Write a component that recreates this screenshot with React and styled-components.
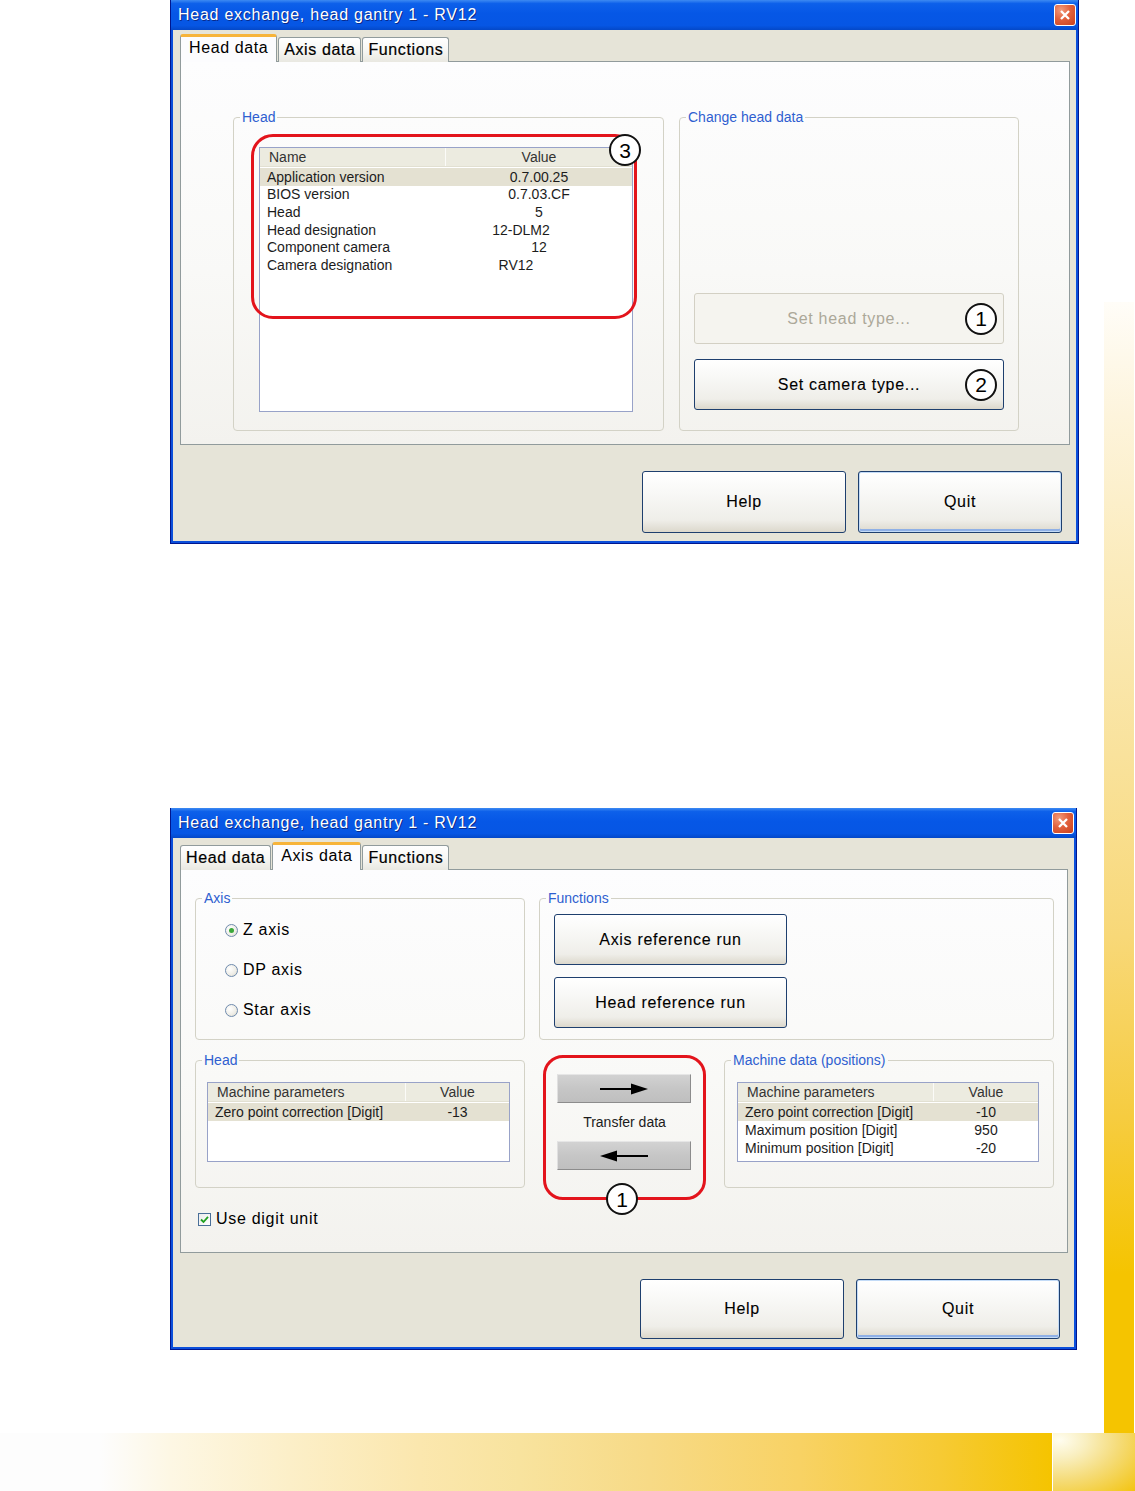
import React from 'react';
import styled, { createGlobalStyle, css } from 'styled-components';

const FONT = '"Liberation Sans", Arial, sans-serif';

const GlobalStyle = createGlobalStyle`
  html, body { margin: 0; padding: 0; background: #ffffff; }
  body { font-family: ${FONT}; }
  * { box-sizing: border-box; }
`;

const headRows = [
  { name: 'Application version', value: '0.7.00.25', selected: true },
  { name: 'BIOS version', value: '0.7.03.CF' },
  { name: 'Head', value: '5' },
  { name: 'Head designation', value: '12-DLM2', shift: -18 },
  { name: 'Component camera', value: '12' },
  { name: 'Camera designation', value: 'RV12', shift: -23 },
];

const axisHeadRows = [
  { name: 'Zero point correction [Digit]', value: '-13', selected: true },
];

const machineRows = [
  { name: 'Zero point correction [Digit]', value: '-10', selected: true },
  { name: 'Maximum position [Digit]', value: '950' },
  { name: 'Minimum position [Digit]', value: '-20' },
];

const tabs = ['Head data', 'Axis data', 'Functions'];

export default function App() {
  return (
    <>
      <GlobalStyle />
      <Page>
        <Main>
          <Dialog width={909} top={0} btnH={62} activeTab="Head data">
            <HeadDataLayout>
              <Group>
                <Legend>Head</Legend>
                <GroupBody $h={305} $pad="22px 0 0 25px">
                  <DataList rows={headRows} width={374} height={265} col={186} rowH={17.6} first="Name" />
                  <Callout>
                    <CalloutMarker>3</CalloutMarker>
                  </Callout>
                </GroupBody>
              </Group>
              <Group>
                <Legend>Change head data</Legend>
                <ButtonStack>
                  <XpButton $w={310} $h={51} disabled>
                    Set head type...
                    <ButtonMarker>1</ButtonMarker>
                  </XpButton>
                  <XpButton $w={310} $h={51}>
                    Set camera type...
                    <ButtonMarker>2</ButtonMarker>
                  </XpButton>
                </ButtonStack>
              </Group>
            </HeadDataLayout>
          </Dialog>

          <Dialog width={907} top={264} btnH={60} activeTab="Axis data">
            <AxisLayout>
              <TopRow>
                <Group>
                  <Legend>Axis</Legend>
                  <GroupBody $h={133} $pad="4px 0 0 29px">
                    {['Z axis', 'DP axis', 'Star axis'].map((label, i) => (
                      <RadioRow key={label}>
                        <RadioDot $checked={i === 0} />
                        {label}
                      </RadioRow>
                    ))}
                  </GroupBody>
                </Group>
                <Group>
                  <Legend>Functions</Legend>
                  <FunctionStack>
                    <XpButton $w={233} $h={51}>Axis reference run</XpButton>
                    <XpButton $w={233} $h={51}>Head reference run</XpButton>
                  </FunctionStack>
                </Group>
              </TopRow>

              <MidRow>
                <Group $w={330}>
                  <Legend>Head</Legend>
                  <GroupBody $h={119} $pad="14px 0 0 11px">
                    <DataList rows={axisHeadRows} width={303} height={80} col={198} rowH={18} first="Machine parameters" />
                  </GroupBody>
                </Group>

                <TransferBox>
                  <ArrowButton aria-label="Transfer to machine">
                    <Arrow dir="right" />
                  </ArrowButton>
                  <TransferLabel>Transfer data</TransferLabel>
                  <ArrowButton aria-label="Transfer to head">
                    <Arrow dir="left" />
                  </ArrowButton>
                  <TransferMarker>1</TransferMarker>
                </TransferBox>

                <Group $w={330}>
                  <Legend>Machine data (positions)</Legend>
                  <GroupBody $h={119} $pad="14px 0 0 12px">
                    <DataList rows={machineRows} width={302} height={80} col={196} rowH={18} first="Machine parameters" />
                  </GroupBody>
                </Group>
              </MidRow>

              <CheckRow>
                <CheckBox>
                  <svg width="9" height="9" viewBox="0 0 9 9">
                    <path d="M1 4.5 L3.5 7 L8 1.8" fill="none" stroke="#21a121" strokeWidth="1.8" />
                  </svg>
                </CheckBox>
                Use digit unit
              </CheckRow>
            </AxisLayout>
          </Dialog>
        </Main>

        <SideStrip>
          <SideBar />
        </SideStrip>

        <BottomBand>
          <Band />
          <Corner />
        </BottomBand>
      </Page>
    </>
  );
}

function Dialog({ width, top, btnH, activeTab, children }) {
  return (
    <Frame $w={width} $top={top}>
      <TitleBar>
        <TitleText>Head exchange, head gantry 1 - RV12</TitleText>
        <CloseButton aria-label="Close">
          <svg width="12" height="12" viewBox="0 0 12 12">
            <path d="M2 2 L10 10 M10 2 L2 10" stroke="#fff" strokeWidth="2.3" />
          </svg>
        </CloseButton>
      </TitleBar>
      <Body>
        <TabStrip>
          {tabs.map((t) => (
            <Tab key={t} $active={t === activeTab}>
              {t}
            </Tab>
          ))}
        </TabStrip>
        <Panel>{children}</Panel>
        <Footer>
          <XpButton $w={204} $h={btnH}>Help</XpButton>
          <XpButton $w={204} $h={btnH} $default>
            Quit
          </XpButton>
        </Footer>
      </Body>
    </Frame>
  );
}

function DataList({ rows, width, height, col, rowH, first }) {
  return (
    <List $w={width} $h={height}>
      <ListHeader $col={col}>
        <HeadCell>{first}</HeadCell>
        <HeadCell $center>Value</HeadCell>
      </ListHeader>
      {rows.map((r) => (
        <ListRow key={r.name} $col={col} $h={rowH} $selected={r.selected}>
          <NameCell>{r.name}</NameCell>
          <ValueCell $shift={r.shift}>{r.value}</ValueCell>
        </ListRow>
      ))}
    </List>
  );
}

function Arrow({ dir }) {
  return (
    <svg width="50" height="14" viewBox="0 0 50 14">
      {dir === 'right' ? (
        <>
          <path d="M1 7 H36" stroke="#000" strokeWidth="2" />
          <polygon points="32,1.5 49,7 32,12.5" fill="#000" />
        </>
      ) : (
        <>
          <path d="M14 7 H49" stroke="#000" strokeWidth="2" />
          <polygon points="18,1.5 1,7 18,12.5" fill="#000" />
        </>
      )}
    </svg>
  );
}

/* page */

const Page = styled.div`
  width: 1135px;
  height: 1491px;
  overflow: hidden;
  display: grid;
  grid-template-columns: 1104px 31px;
  grid-template-rows: 1433px 58px;
  background: #fff;
`;

const Main = styled.main`
  display: flex;
  flex-direction: column;
  align-items: flex-start;
  padding-left: 170px;
`;

const SideStrip = styled.div`
  padding-top: 302px;
`;

const SideBar = styled.div`
  width: 30px;
  height: 100%;
  background: linear-gradient(
    180deg,
    #fffdf8 0%,
    #fdf4dc 10%,
    #fbebbb 24%,
    #f9e29c 40%,
    #f8d878 56%,
    #f6cc40 72%,
    #f5c400 86%,
    #f5c400 100%
  );
`;

const BottomBand = styled.div`
  grid-column: 1 / -1;
  display: flex;
  gap: 1px;
`;

const Band = styled.div`
  width: 1052px;
  background: linear-gradient(
    90deg,
    #fdfdfd 0px,
    #fdfdfd 100px,
    #fdf7e4 170px,
    #fcefc8 290px,
    #fbe7ae 420px,
    #f8e39e 520px,
    #f7da86 650px,
    #f8d264 800px,
    #f6ca34 940px,
    #f5c400 1052px
  );
`;

const Corner = styled.div`
  flex: 1;
  background: radial-gradient(
    ellipse at 8% 12%,
    #fffdf0 0%,
    #f9efc0 25%,
    #f5dc7a 55%,
    #f3c410 100%
  );
`;

/* window chrome */

const Frame = styled.section`
  width: ${(p) => p.$w}px;
  margin-top: ${(p) => p.$top}px;
  border: 1px solid #00168e;
  border-top: none;
  background: #0b4fdb;
  font-family: ${FONT};
`;

const TitleBar = styled.header`
  height: 30px;
  display: flex;
  align-items: center;
  justify-content: space-between;
  padding: 0 2px 0 7px;
  background: linear-gradient(
    180deg,
    #3d8af2 0%,
    #0d60ea 12%,
    #0657e6 45%,
    #0656e4 85%,
    #0448c8 100%
  );
`;

const TitleText = styled.span`
  color: #fff;
  font-size: 16px;
  letter-spacing: 0.75px;
  text-shadow: 1px 1px 0 #0a2a8a;
`;

const CloseButton = styled.span`
  width: 22px;
  height: 22px;
  border: 1px solid #fff;
  border-radius: 3px;
  display: flex;
  align-items: center;
  justify-content: center;
  background: radial-gradient(circle at 30% 25%, #f29b7c 0%, #e2613d 45%, #c9401c 100%);
`;

const Body = styled.div`
  margin: 0 2px 2px;
  padding: 4px 6px 8px 7px;
  background: #e6e4d8;
`;

const TabStrip = styled.nav`
  position: relative;
  z-index: 1;
  display: flex;
  align-items: flex-end;
  gap: 1px;
  height: 28px;
  margin-bottom: -1px;
`;

const Tab = styled.div`
  height: 25px;
  padding: 0 5px;
  display: flex;
  align-items: center;
  border: 1px solid #919b9c;
  border-bottom: none;
  border-radius: 3px 3px 0 0;
  background: linear-gradient(180deg, #ffffff 0%, #f7f7f4 50%, #e9e8e1 100%);
  font-size: 16px;
  letter-spacing: 0.6px;
  color: #000;
  -webkit-text-stroke: 0.2px #000;
  white-space: nowrap;

  ${(p) =>
    p.$active &&
    css`
      height: 28px;
      padding: 0 8px 3px;
      border-top: 3px solid #f7b43a;
      background: #fcfcfe;
      -webkit-text-stroke: 0;
    `}
`;

const Panel = styled.div`
  height: 384px;
  border: 1px solid #919b9c;
  background: linear-gradient(180deg, #fdfdfe 0%, #f9f9f7 55%, #f3f2ee 100%);
`;

const Footer = styled.footer`
  display: flex;
  justify-content: flex-end;
  gap: 12px;
  padding: 26px 8px 0 0;
`;

const XpButton = styled.button`
  position: relative;
  width: ${(p) => p.$w}px;
  height: ${(p) => p.$h}px;
  padding: 0;
  border: 1px solid #1e3f6e;
  border-radius: 3px;
  background: linear-gradient(180deg, #ffffff 0%, #f8f8f6 35%, #efeee9 80%, #dcd8cc 100%);
  font-family: ${FONT};
  font-size: 16px;
  letter-spacing: 0.7px;
  color: #000;
  -webkit-text-stroke: 0.1px #000;

  ${(p) =>
    p.$default &&
    css`
      box-shadow: inset 0 0 0 1px #c3dbf7, inset 0 -2px 0 1px #8fb0e6;
    `}

  ${(p) =>
    p.disabled &&
    css`
      border-color: #d3d0c4;
      background: #f5f4ef;
      color: #aca899;
      -webkit-text-stroke: 0;
    `}
`;

/* groups */

const Group = styled.fieldset`
  margin: 0;
  padding: 0;
  min-width: 0;
  ${(p) => p.$w && `width: ${p.$w}px;`}
  border: 1px solid #d3d2c6;
  border-radius: 4px;
`;

const Legend = styled.legend`
  margin-left: 6px;
  padding: 0 2px;
  font-size: 14px;
  line-height: 16px;
  color: #2f5fd0;
`;

const GroupBody = styled.div`
  position: relative;
  height: ${(p) => p.$h}px;
  padding: ${(p) => p.$pad};
`;

const HeadDataLayout = styled.div`
  display: grid;
  grid-template-columns: 431px 340px;
  gap: 15px;
  padding: 47px 0 0 52px;
`;

const ButtonStack = styled.div`
  height: 305px;
  display: flex;
  flex-direction: column;
  justify-content: flex-end;
  gap: 15px;
  padding: 0 14px 20px;
`;

/* list views */

const List = styled.div`
  width: ${(p) => p.$w}px;
  height: ${(p) => p.$h}px;
  border: 1px solid #98a2c8;
  background: #fff;
  font-size: 14px;
  color: #1c1c1c;
  overflow: hidden;
`;

const ListHeader = styled.div`
  display: grid;
  grid-template-columns: ${(p) => p.$col}px 1fr;
  height: 19px;
  margin-bottom: 1px;
  background: #ecebe0;
  border-bottom: 1px solid #e2e0d2;
`;

const HeadCell = styled.div`
  display: flex;
  align-items: center;
  justify-content: ${(p) => (p.$center ? 'center' : 'flex-start')};
  padding-left: ${(p) => (p.$center ? 0 : 9)}px;
  color: #333;
  &:first-child {
    border-right: 1px solid #fbfbf8;
  }
`;

const ListRow = styled.div`
  display: grid;
  grid-template-columns: ${(p) => p.$col}px 1fr;
  height: ${(p) => p.$h}px;
  align-items: center;
  background: ${(p) => (p.$selected ? '#e4e1d2' : 'transparent')};
`;

const NameCell = styled.span`
  padding-left: 7px;
  white-space: nowrap;
`;

const ValueCell = styled.span`
  text-align: center;
  transform: translateX(${(p) => p.$shift || 0}px);
`;

/* annotations */

const Marker = styled.span`
  position: absolute;
  width: 32px;
  height: 32px;
  border: 2px solid #111;
  border-radius: 50%;
  background: #fff;
  display: flex;
  align-items: center;
  justify-content: center;
  font-family: ${FONT};
  font-size: 21px;
  line-height: 1;
  letter-spacing: 0;
  color: #000;
  -webkit-text-stroke: 0;
`;

const ButtonMarker = styled(Marker)`
  right: 6px;
  top: calc(50% - 16px);
`;

const Callout = styled.div`
  position: absolute;
  left: 17px;
  top: 9px;
  width: 386px;
  height: 185px;
  border: 3px solid #e3141c;
  border-radius: 22px;
`;

const CalloutMarker = styled(Marker)`
  left: 355px;
  top: -3px;
`;

/* axis data tab */

const AxisLayout = styled.div`
  padding: 20px 13px 0 14px;
`;

const TopRow = styled.div`
  display: grid;
  grid-template-columns: 330px 515px;
  gap: 14px;
`;

const RadioRow = styled.label`
  height: 40px;
  display: flex;
  align-items: center;
  gap: 5px;
  font-size: 16px;
  letter-spacing: 0.7px;
  color: #000;
`;

const RadioDot = styled.span`
  width: 13px;
  height: 13px;
  border-radius: 50%;
  border: 1px solid #6f8bae;
  background: radial-gradient(circle at 35% 35%, #ffffff 0%, #eeede6 60%, #d6d3c6 100%);
  display: flex;
  align-items: center;
  justify-content: center;

  &::after {
    content: '';
    width: 5px;
    height: 5px;
    border-radius: 50%;
    background: ${(p) => (p.$checked ? '#3aa83a' : 'transparent')};
  }
`;

const FunctionStack = styled.div`
  height: 133px;
  display: flex;
  flex-direction: column;
  gap: 12px;
  padding: 8px 0 0 14px;
`;

const MidRow = styled.div`
  display: flex;
  align-items: flex-start;
  margin-top: 12px;
`;

const TransferBox = styled.div`
  position: relative;
  width: 163px;
  height: 145px;
  margin: 3px 18px 0;
  padding: 16px 11px 0;
  border: 3px solid #e3141c;
  border-radius: 20px;
  display: flex;
  flex-direction: column;
`;

const ArrowButton = styled.button`
  width: 134px;
  height: 29px;
  padding: 0;
  display: flex;
  align-items: center;
  justify-content: center;
  border: 1px solid #8c8c8c;
  border-top-color: #e6e6e6;
  border-left-color: #e0e0e0;
  background: linear-gradient(180deg, #d2d2d2 0%, #c6c6c6 50%, #bfbfbf 100%);
`;

const TransferLabel = styled.div`
  height: 38px;
  display: flex;
  align-items: center;
  justify-content: center;
  font-size: 14px;
  color: #1c1c1c;
`;

const TransferMarker = styled(Marker)`
  left: 60px;
  bottom: -18px;
`;

const CheckRow = styled.label`
  display: flex;
  align-items: center;
  gap: 5px;
  margin-top: 10px;
  padding-left: 3px;
  font-size: 16px;
  letter-spacing: 0.7px;
  color: #000;
`;

const CheckBox = styled.span`
  width: 13px;
  height: 13px;
  border: 1px solid #4a6f98;
  background: linear-gradient(135deg, #ececec 0%, #ffffff 100%);
  display: flex;
  align-items: center;
  justify-content: center;
`;
